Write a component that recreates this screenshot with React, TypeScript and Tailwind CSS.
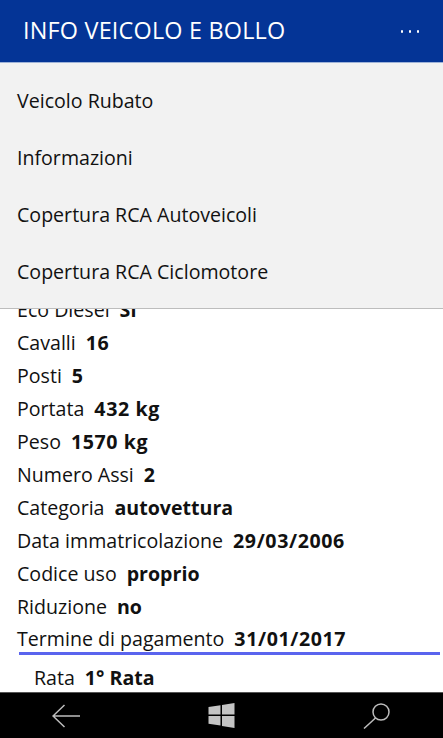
const menuItems = ['Veicolo Rubato', 'Informazioni', 'Copertura RCA Autoveicoli', 'Copertura RCA Ciclomotore'];

const rows = [
  ['Eco Diesel', 'Sì'],
  ['Cavalli', '16'],
  ['Posti', '5'],
  ['Portata', '432 kg'],
  ['Peso', '1570 kg'],
  ['Numero Assi', '2'],
  ['Categoria', 'autovettura'],
  ['Data immatricolazione', '29/03/2006'],
  ['Codice uso', 'proprio'],
  ['Riduzione', 'no'],
];

const Row = ({ label, value }: { label: string; value: string }) => (
  <div className="flex h-[33px] items-center gap-[10px] whitespace-nowrap">
    <span>{label}</span>
    <span className={/\d/.test(value) ? 'font-bold tracking-[0.6px]' : 'font-bold'}>{value}</span>
  </div>
);

export default function App() {
  return (
    <div className="flex h-[738px] w-[443px] flex-col overflow-hidden bg-white font-['Open_Sans','Noto_Sans',sans-serif] text-[19.6px] text-[#111]">
      <header className="flex h-[62px] shrink-0 items-center justify-between bg-[#043496] pl-[23px] pr-[24px] text-white">
        <h1 className="text-[23.4px] font-normal tracking-[0.2px]">INFO VEICOLO E BOLLO</h1>
        <div className="flex gap-[5.5px] pt-[1px]">
          <span className="h-[2.5px] w-[2.5px] rounded-full bg-white" />
          <span className="h-[2.5px] w-[2.5px] rounded-full bg-white" />
          <span className="h-[2.5px] w-[2.5px] rounded-full bg-white" />
        </div>
      </header>

      <main className="relative flex-1 overflow-hidden">
        <div className="absolute inset-x-0 top-0 z-10 h-[247px] border-t border-b border-t-[#9fb3d8] border-b-[#bdbdbd] bg-[#f2f2f2] pt-[9px]">
          {menuItems.map((item) => (
            <div key={item} className="flex h-[57px] items-center pl-[17px]">
              {item}
            </div>
          ))}
        </div>

        <div className="flex h-full flex-col justify-end pl-[17px]">
          {rows.map(([label, value]) => (
            <Row key={label} label={label} value={value} />
          ))}
          <div className="-mt-[1px] h-[35px]">
            <Row label="Termine di pagamento" value="31/01/2017" />
            <div className="ml-[2px] mr-[3px] -mt-[3px] h-[3px] bg-[#5a64ee]" />
          </div>
          <div className="flex h-[35px] items-center gap-[10px] pl-[17px] pt-[6px]">
            <span>Rata</span>
            <span className="font-bold">1° Rata</span>
          </div>
        </div>
      </main>

      <nav className="grid h-[46px] shrink-0 grid-cols-3 items-center border-t border-[#555] bg-black">
        <div className="flex justify-center pr-[15px]">
          <svg width="28" height="24" viewBox="0 0 28 24" fill="none" stroke="#bdbdbd" strokeWidth="1.5">
            <path d="M1 12H28M12.500 1L1 12l11.500 11" />
          </svg>
        </div>
        <div className="flex justify-center">
          <svg width="27" height="25" viewBox="0 0 26 25" fill="#c4c4c4">
            <path d="M0 4l12-1.800v9.300H0zM13.500 2L26 0v11.500H13.500zM0 13h12v9.400L0 20.700zM13.500 13H26v12l-12.500-2z" />
          </svg>
        </div>
        <div className="flex justify-center pl-[16px]">
          <svg width="28" height="26" viewBox="0 0 28 26" fill="none" stroke="#bdbdbd" strokeWidth="1.5">
            <circle cx="18" cy="9" r="8" />
            <path d="M12.500 15L1 25.500" />
          </svg>
        </div>
      </nav>
    </div>
  );
}
